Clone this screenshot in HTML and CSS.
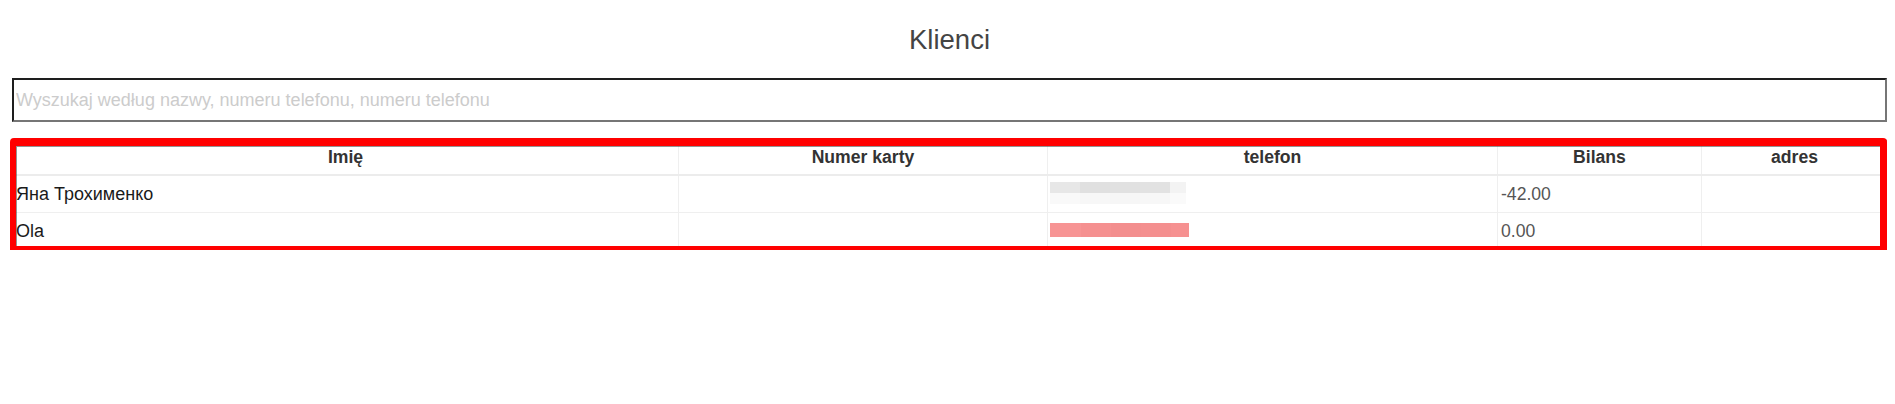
FILE: index.html
```html
<!DOCTYPE html>
<html lang="pl">
<head>
<meta charset="utf-8">
<title>Klienci</title>
<link rel="stylesheet" href="styles.css">
</head>
<body>
<div class="page">
  <h1 class="title">Klienci</h1>
  <div class="search">
    <input class="search-input" type="text" placeholder="Wyszukaj według nazwy, numeru telefonu, numeru telefonu">
  </div>
  <div class="table-wrap">
    <table class="clients">
      <colgroup>
        <col class="c-name">
        <col class="c-card">
        <col class="c-phone">
        <col class="c-balance">
        <col class="c-address">
      </colgroup>
      <thead>
        <tr>
          <th>Imię</th>
          <th>Numer karty</th>
          <th>telefon</th>
          <th>Bilans</th>
          <th>adres</th>
        </tr>
      </thead>
      <tbody>
        <tr>
          <td class="name">Яна Трохименко</td>
          <td></td>
          <td><div class="blur blur-gray"></div></td>
          <td class="num">-42.00</td>
          <td></td>
        </tr>
        <tr>
          <td class="name">Ola</td>
          <td></td>
          <td><div class="blur blur-red"></div></td>
          <td class="num">0.00</td>
          <td></td>
        </tr>
      </tbody>
    </table>
    <div class="annotation"></div>
  </div>
</div>
</body>
</html>
```
FILE: styles.css
```css
html, body {
  margin: 0;
  padding: 0;
  background: #ffffff;
}

body {
  margin: 8px;
  font-family: "Liberation Sans", Arial, Helvetica, sans-serif;
  color: #333333;
}

.page {
  padding-left: 4px;
}

.title {
  margin: 17px 0 23px;
  font-size: 27.5px;
  line-height: 30px;
  font-weight: normal;
  text-align: center;
  color: #444444;
}

.search {
  margin-bottom: 16px;
}

.search-input {
  display: block;
  box-sizing: border-box;
  width: 100%;
  height: 44px;
  margin: 0;
  padding: 1px 2px;
  border-style: solid;
  border-width: 2px;
  border-color: #1e1e1e #767676 #767676 #1e1e1e;
  font-family: "Liberation Sans", Arial, Helvetica, sans-serif;
  font-size: 18px;
  color: #333333;
  background: #ffffff;
  outline: none;
}

.search-input::placeholder {
  color: #cccccc;
}

.table-wrap {
  position: relative;
}

.clients {
  width: 100%;
  border-collapse: collapse;
  table-layout: fixed;
  font-size: 17.6px;
}

.c-name { width: 666px; }
.c-card { width: 369px; }
.c-phone { width: 450px; }
.c-balance { width: 204px; }
.c-address { width: 186px; }

.clients th {
  padding: 7px 3px 5px;
  line-height: 24px;
  font-weight: bold;
  text-align: center;
  color: #333333;
  border-left: 1px solid #efefef;
  border-right: 1px solid #efefef;
  border-bottom: 2px solid #ececec;
}

.clients td {
  padding: 6px 3px;
  line-height: 24px;
  text-align: left;
  vertical-align: top;
  border: 1px solid #efefef;
  height: 24px;
}

.clients td.name {
  color: #1a1a1a;
  font-size: 18px;
}

.clients td.num {
  color: #555555;
}

.blur {
  margin-left: -1px;
}

.blur-gray {
  width: 136px;
  height: 22px;
  background:
    linear-gradient(to right, #e7e7e7 0 30px, #e0e0e0 30px 60px, #e1e1e1 60px 90px, #e2e2e2 90px 120px, #f3f3f3 120px) top / 100% 11px no-repeat,
    linear-gradient(to right, #f9f9f9 0 30px, #f7f7f7 30px 60px, #f6f6f6 60px 90px, #f7f7f7 90px 120px, #fafafa 120px) bottom / 100% 11px no-repeat;
}

.blur-red {
  width: 139px;
  height: 14px;
  margin-top: 4px;
  background: linear-gradient(to right, #f79494 0 31px, #f59090 31px 61px, #f38e8e 61px 91px, #f48f8f 91px 121px, #f69191 121px);
}

.annotation {
  position: absolute;
  left: -2px;
  top: 0;
  width: 1877px;
  height: 116px;
  box-sizing: border-box;
  border-style: solid;
  border-color: #ff0000;
  border-width: 8px 7px 8px 6px;
  border-radius: 4px;
  filter: drop-shadow(1px 1px 0 rgba(60, 60, 60, 0.55));
  pointer-events: none;
}
```
